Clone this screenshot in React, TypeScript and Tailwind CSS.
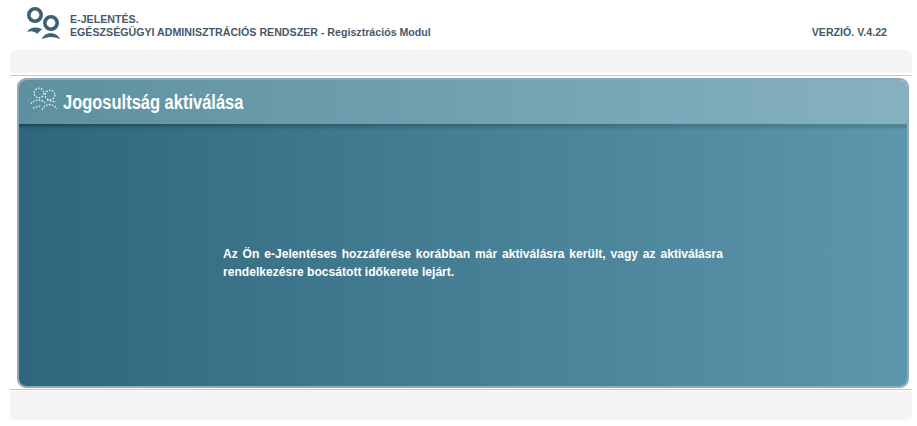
export default function App() {
  const font = { fontFamily: '"Liberation Sans", Arial, sans-serif' };
  return (
    <div className="w-[917px] h-[426px] bg-white overflow-hidden flex flex-col" style={font}>
      <header className="h-[50px] flex pl-[25px] pr-[30px]">
        <svg width="36" height="33" viewBox="0 0 36 33" className="mt-[7px] shrink-0" fill="none">
          <circle cx="10" cy="8" r="6.2" stroke="#3f6073" strokeWidth="3.6" />
          <circle cx="26" cy="16" r="6.2" stroke="#3f6073" strokeWidth="3.6" />
          <path d="M2 25 C5 19.5 13 19.5 17.5 22.5 C15 23.5 13.5 25 12.5 27 C9.5 24 5.5 23.5 2 25Z" fill="#3f6073" />
          <path d="M17.5 31.5 C20 25 31 25 34.5 31.5 C30 29 22 29 17.5 31.5Z" fill="#3f6073" stroke="#3f6073" strokeWidth="1" />
        </svg>
        <div className="ml-[9px] mt-[13px] text-[10.65px] leading-[13px] font-bold text-[#46596a]">
          <div>E-JELENTÉS.</div>
          <div>EGÉSZSÉGÜGYI ADMINISZTRÁCIÓS RENDSZER - Regisztrációs Modul</div>
        </div>
        <div className="ml-auto mt-[26px] text-[10.65px] leading-[13px] font-bold text-[#46596a]">VERZIÓ. V.4.22</div>
      </header>

      <div className="mx-[10px] w-[902px] h-[23px] bg-[#f5f5f5] rounded-t-[5px]" />
      <div className="mx-[10px] w-[902px] mt-[2px] h-px bg-[#c3c6ca]" />

      <main className="ml-[17px] w-[892px] h-[310px] mt-[2px] rounded-[9px] border-2 border-[#8fa9bd] overflow-hidden flex flex-col">
        <div className="h-[44px] shrink-0 flex items-center pl-[11px] bg-gradient-to-r from-[#5d919f] to-[#86b1c1]">
          <svg width="28" height="25" viewBox="0 0 28 25" className="shrink-0 -mt-[5px]" fill="none" stroke="#f2f7f8" strokeWidth="1.2" strokeDasharray="1.6 1.4">
            <circle cx="9" cy="6" r="4.8" />
            <circle cx="20" cy="8" r="4.8" />
            <path d="M1 17 C4 12 12 12 15 16" />
            <path d="M12 23 C15 16 23 16 27 22" />
            <path d="M3 21 L10 19 M17 13 L26 15" />
          </svg>
          <h1 className="ml-[5px] text-white text-[19.5px] leading-[24px] font-bold scale-x-[0.845] origin-left whitespace-nowrap">Jogosultság aktiválása</h1>
        </div>
        <div className="h-[2px] shrink-0 bg-gradient-to-r from-[#234a5b] to-[#4f8599]" />
        <div className="flex-1 bg-gradient-to-r from-[#2f667c] to-[#5d97ad] flex flex-col">
          <div className="h-[4px] shrink-0 bg-gradient-to-b from-black/15 to-transparent" />
          <p className="w-[500px] ml-[204px] mt-[115px] text-white text-[12.1px] leading-[18px] font-bold [text-align:justify]">
            Az Ön e-Jelentéses hozzáférése korábban már aktiválásra került, vagy az aktiválásra rendelkezésre bocsátott időkerete lejárt.
          </p>
        </div>
      </main>

      <div className="mx-[10px] w-[902px] mt-px h-px bg-[#c3c6ca]" />
      <div className="mx-[10px] w-[902px] mt-px h-[29px] bg-[#f5f5f5] rounded-b-[5px]" />
    </div>
  );
}
